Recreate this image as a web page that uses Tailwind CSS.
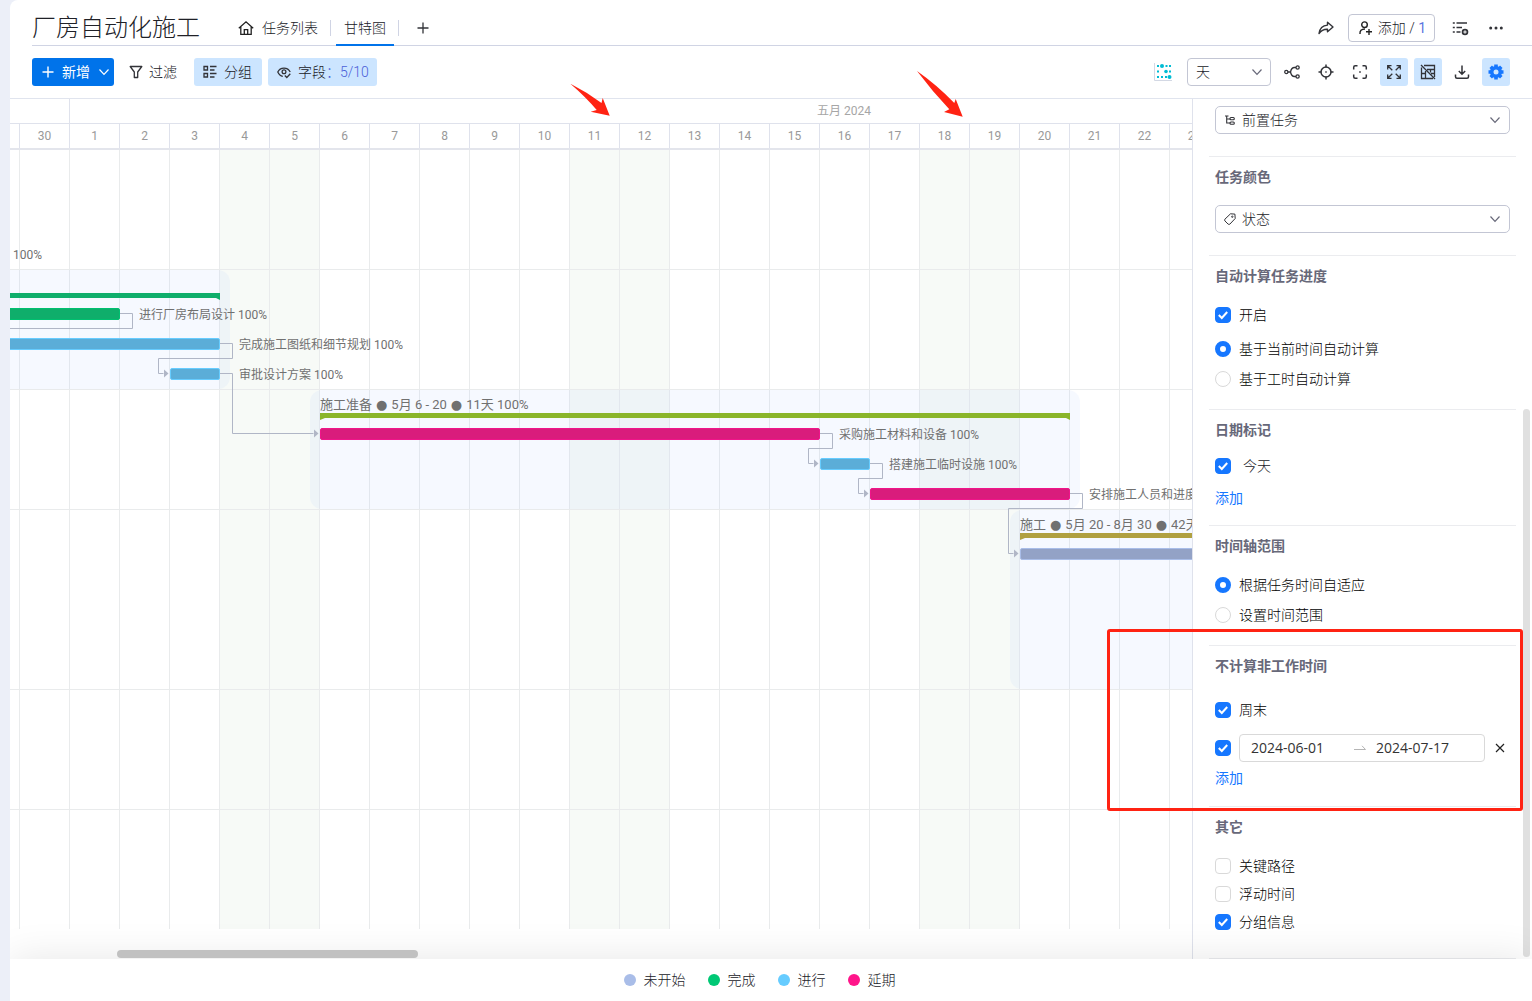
<!DOCTYPE html>
<html lang="zh-CN">
<head>
<meta charset="utf-8">
<meta name="viewport" content="width=device-width, initial-scale=1">
<title>厂房自动化施工</title>
<script src="https://cdn.jsdelivr.net/npm/@tailwindcss/browser@4"></script>
</head>
<body class="flex h-screen overflow-hidden bg-[#eceff8] pl-[10px] font-['Roboto','Noto_Sans_CJK_SC',sans-serif] text-sm font-light text-[#202127]">

<svg class="absolute size-0" aria-hidden="true">
  <symbol id="check" viewBox="0 0 16 16"><path d="M3.800 8l3 3 5.400-6" fill="none" stroke="#fff" stroke-width="2"/></symbol>
  <symbol id="chevron" viewBox="0 0 12 12"><path d="M1.500 3.500L6 8.300l4.500-4.800" fill="none" stroke="currentColor" stroke-width="1.200"/></symbol>
  <marker id="arrow" markerUnits="userSpaceOnUse" markerWidth="6" markerHeight="10" refX="0" refY="5" orient="auto"><path d="M0 .5l5 4.500-5 4.500z" fill="#b0b6c6"/></marker>
</svg>

<div class="relative flex min-w-0 flex-1 flex-col overflow-hidden rounded-tl-lg bg-white">

  <header class="ml-[22px] flex h-[46px] items-center border-b border-[#d0d4e4] pr-[22px]">
    <h1 class="w-[196px] pt-[10px] text-2xl font-light whitespace-nowrap">厂房自动化施工</h1>
    <nav class="flex h-full items-center pt-[10px]">
      <a href="#list" class="flex items-center gap-2 px-[10px]">
        <svg class="size-4" viewBox="0 0 16 16" fill="none" stroke="#222" stroke-width="1.300"><path d="M.8 8.200L8 1.800l7.200 6.400M2.800 6.800v7.500h10.400V6.800M6.300 14.300V9.600h3.400v4.700"/></svg>
        任务列表
      </a>
      <span class="ml-[2px] h-4 w-px bg-[#d0d4e4]"></span>
      <a href="#gantt" aria-current="page" class="ml-[5px] mr-1 flex h-[36px] items-center border-b-2 border-[#0073ea] px-2 pb-1 pt-[6px]">甘特图</a>
      <span class="h-4 w-px bg-[#d0d4e4]"></span>
      <button class="ml-[18px]" aria-label="添加视图">
        <svg class="size-3" viewBox="0 0 12 12" fill="none" stroke="#323338" stroke-width="1.300"><path d="M6 .5v11M.5 6h11"/></svg>
      </button>
    </nav>
    <div class="ml-auto flex items-center pt-[10px]">
      <button aria-label="分享" class="mr-[14px]">
        <svg class="size-4" viewBox="0 0 16 16" fill="none" stroke="#323338" stroke-width="1.400" stroke-linejoin="round"><path d="M9.500 2.300L15 7l-5.500 4.800V9.200C6 9 3.500 10 1 13.500c.6-4.500 3.500-8 8.500-8.400z"/></svg>
      </button>
      <button class="flex h-7 items-center gap-[6px] rounded border border-[#c3c6d4] pr-2 pl-[9px] whitespace-nowrap">
        <svg class="size-[14px]" viewBox="0 0 14 14" fill="none" stroke="#222" stroke-width="1.400"><circle cx="6.500" cy="3.700" r="2.800"/><path d="M2 13c-.3-3.200 1.300-5 5-5M8 10.800h6M11 8v6"/></svg>
        <span>添加 / <span class="font-normal text-[#5b76e0]">1</span></span>
      </button>
      <button aria-label="列表设置" class="ml-[17px]">
        <svg class="h-4 w-[18px]" viewBox="0 0 18 16" fill="none" stroke="#323338" stroke-width="1.400"><path d="M4.500 3H15M4.500 7.500H10M4.500 12H8.500M.8 3h2M.8 7.500h2M.8 12h2"/><circle cx="13" cy="12" r="3.300" fill="#323338" stroke="none"/><path d="M13 10.300v3.400M11.300 12h3.400" stroke="#fff" stroke-width="1"/></svg>
      </button>
      <button aria-label="更多" class="ml-[19px] mr-[7px]">
        <svg class="h-1 w-[14px]" viewBox="0 0 14 4" fill="#323338"><circle cx="1.700" cy="2" r="1.500"/><circle cx="7" cy="2" r="1.500"/><circle cx="12.300" cy="2" r="1.500"/></svg>
      </button>
    </div>
  </header>

  <div class="flex h-[53px] items-center gap-[6px] border-b border-[#e0e4ee] pl-[22px] pr-[22px] whitespace-nowrap">
    <button class="flex h-7 w-[82px] items-center rounded-[3px] bg-[#0073ea] pl-[10px] font-normal text-white">
      <svg class="size-3" viewBox="0 0 12 12" fill="none" stroke="currentColor" stroke-width="1.400"><path d="M6 .5v11M.5 6h11"/></svg>
      <span class="mx-2">新增</span>
      <svg class="size-3"><use href="#chevron"/></svg>
    </button>
    <button class="flex h-7 w-[68px] items-center gap-[6px] pl-[9px]">
      <svg class="size-[14px]" viewBox="0 0 14 14" fill="none" stroke="#323338" stroke-width="1.300" stroke-linejoin="round"><path d="M1.200 1.500h11.600L8.700 7v5.500H5.300V7z"/></svg>
      过滤
    </button>
    <button class="flex h-7 w-[68px] items-center gap-[7px] rounded-[3px] bg-[#cce5ff] pl-[9px]">
      <svg class="size-[14px]" viewBox="0 0 14 14" fill="none" stroke="#323338" stroke-width="1.300"><path d="M1 1.500h3.500V5H1zM1 8.500h3.500V12H1zM7 1.500h6.500M7 5h4.500M7 8.500h6.500M7 12h4.500"/></svg>
      分组
    </button>
    <button class="flex h-7 w-[109px] items-center gap-[7px] rounded-[3px] bg-[#cce5ff] pl-[9px]">
      <svg class="size-[14px]" viewBox="0 0 14 14" fill="none" stroke="#323338" stroke-width="1.300"><path d="M5.800 11.300C3.500 11 1.800 9.300.8 7c2.300-5.300 10-5.300 12.400 0"/><circle cx="7" cy="6.800" r="1.900"/><path d="M7.800 10.500l2 2 3.500-3.800"/></svg>
      <span class="flex">字段<span class="text-[#4a5fd8]">：</span><span class="text-[#4a5fd8]">5/10</span></span>
    </button>

    <svg class="ml-auto mr-[9px] size-[18px]" viewBox="0 0 18 18"><path d="M.5 0v17.500H18" fill="none" stroke="#d3d8e4"/><g fill="#00bcd4"><circle cx="8" cy="3" r="2"/><circle cx="12" cy="8.500" r="1.800"/><circle cx="15.500" cy="14" r="2"/><path d="M3 2h2v2H3zM11.500 2h2v2h-2zM15 2h2v2h-2zM3 7.500h2v2H3zM15 7.500h2v2h-2zM3 13h2v2H3zM7 13h2v2H7zM11 13h2v2h-2z"/></g></svg>
    <div class="relative mr-px flex w-[84px] items-center">
      <select aria-label="时间单位" class="h-7 w-full appearance-none rounded border border-[#c3c6d4] bg-white px-2 font-light"><option>天</option><option>周</option><option>月</option></select>
      <svg class="pointer-events-none absolute right-2 size-3 text-[#676879]"><use href="#chevron"/></svg>
    </div>
    <button aria-label="依赖" class="flex size-7 items-center justify-center"><svg class="size-4" viewBox="0 0 16 16" fill="none" stroke="#323338" stroke-width="1.300"><circle cx="2.300" cy="8" r="1.600"/><circle cx="13.600" cy="3.500" r="1.600"/><circle cx="13.600" cy="12.500" r="1.600"/><path d="M4 8h2.500M12 3.500h-1.500C8 3.500 7 5.500 6.500 8c.5 2.500 1.500 4.500 4 4.500H12"/></svg></button>
    <button aria-label="定位今天" class="flex size-7 items-center justify-center"><svg class="size-4" viewBox="0 0 16 16" fill="none" stroke="#323338" stroke-width="1.500"><circle cx="8" cy="8" r="5"/><path d="M8 .5v3M8 12.500v3M.5 8h3M12.500 8h3M7.300 8h1.400"/></svg></button>
    <button aria-label="聚焦" class="flex size-7 items-center justify-center"><svg class="size-4" viewBox="0 0 16 16" fill="none" stroke="#323338" stroke-width="1.500"><path d="M1.700 5.500V3.200q0-1.500 1.500-1.500h2.300M10.500 1.700h2.300q1.500 0 1.500 1.500v2.300M14.300 10.500v2.300q0 1.500-1.500 1.500h-2.300M5.500 14.300H3.200q-1.500 0-1.500-1.500v-2.300M7.200 8h1.600"/></svg></button>
    <button aria-label="全屏" class="flex size-7 items-center justify-center rounded-[3px] bg-[#cce5ff]"><svg class="size-4" viewBox="0 0 16 16" fill="none" stroke="#323338" stroke-width="1.300"><path d="M1.700 5.500V1.700h3.800M1.700 1.700l4.600 4.600M10.500 1.700h3.800v3.800M14.300 1.700L9.700 6.300M14.300 10.500v3.800h-3.800M14.300 14.300L9.700 9.700M5.500 14.300H1.700v-3.800M1.700 14.300l4.600-4.600"/></svg></button>
    <button aria-label="隐藏表格" class="flex size-7 items-center justify-center rounded-[3px] bg-[#cce5ff]"><svg class="size-4" viewBox="0 0 16 16" fill="none" stroke="#323338" stroke-width="1.300"><path d="M4 1.500h10.500V13M1.500 3.500v11H13M5.500 7v7.500M7 5.500h7.500M1.500 9.500h4M11 9.500h3.500M10.500 5.500v3M1 1l14 14"/></svg></button>
    <button aria-label="下载" class="flex size-7 items-center justify-center"><svg class="size-4" viewBox="0 0 16 16" fill="none" stroke="#323338" stroke-width="1.500"><path d="M8 1.500V10M4.800 7L8 10.200 11.200 7M1.500 10.500v2.300q0 1.500 1.500 1.500h10q1.500 0 1.500-1.500v-2.300"/></svg></button>
    <button aria-label="设置" class="flex size-7 items-center justify-center rounded-[3px] bg-[#cce5ff]"><svg class="size-4" viewBox="0 0 16 16"><path d="M8 .5v15M.5 8h15M2.700 2.700l10.600 10.600M13.300 2.700L2.700 13.300" stroke="#1677ff" stroke-width="3.600"/><circle cx="8" cy="8" r="4.300" fill="none" stroke="#1677ff" stroke-width="3.600"/><circle cx="8" cy="8" r="2.500" fill="#cce5ff"/></svg></button>
  </div>

  <div class="flex min-h-0 flex-1">

    <section aria-label="甘特图" class="relative min-w-0 flex-1 overflow-hidden">
      <div class="flex h-[25px] border-b border-[#dfe2ec] text-xs font-normal text-[#a6a6a6]">
        <div class="w-[60px] shrink-0 border-r border-[#dfe2ec]"></div>
        <div class="flex w-[1548px] shrink-0 items-center justify-center">五月 2024</div>
      </div>
      <div class="flex h-[26px] border-b-2 border-[#e3e5ec] text-center text-xs leading-6 font-normal text-[#999] *:w-[50px] *:shrink-0 *:border-r *:border-[#dfe2ec]">
        <div class="-ml-10"></div><div>30</div><div>1</div><div>2</div><div>3</div><div>4</div><div>5</div><div>6</div><div>7</div><div>8</div><div>9</div><div>10</div><div>11</div><div>12</div><div>13</div><div>14</div><div>15</div><div>16</div><div>17</div><div>18</div><div>19</div><div>20</div><div>21</div><div>22</div><div>23</div>
      </div>

      <div class="relative h-[779px]">
        <div class="flex h-full *:w-[50px] *:shrink-0 *:border-r *:border-[#e9ebec]">
          <div class="-ml-10"></div><div></div><div></div><div></div><div></div>
          <div class="bg-[#f7faf7]"></div><div class="bg-[#f7faf7]"></div>
          <div></div><div></div><div></div><div></div><div></div>
          <div class="bg-[#f7faf7]"></div><div class="bg-[#f7faf7]"></div>
          <div></div><div></div><div></div><div></div><div></div>
          <div class="bg-[#f7faf7]"></div><div class="bg-[#f7faf7]"></div>
          <div></div><div></div><div></div><div></div>
        </div>
        <div class="absolute inset-0 flex flex-col *:border-b *:border-[#e9ebec]">
          <div class="h-[120px]"></div><div class="h-[120px]"></div><div class="h-[120px]"></div><div class="h-[180px]"></div><div class="h-[120px]"></div>
        </div>

        <!-- group backgrounds -->
        <div class="absolute top-[120px] -left-5 h-[119px] w-[240px] rounded-xl bg-[rgba(165,200,255,0.1)]"></div>
        <div class="absolute top-[240px] left-[300px] h-[119px] w-[770px] rounded-xl bg-[rgba(165,200,255,0.1)]"></div>
        <div class="absolute top-[360px] left-[1000px] h-[179px] w-[2000px] rounded-xl bg-[rgba(165,200,255,0.1)]"></div>

        <!-- dependency links -->
        <svg class="absolute inset-0 size-full" fill="none" stroke="#b0b6c6" stroke-width="1">
          <path d="M110 163.500h12.500v15H-2"/>
          <path d="M210 193.500h12.500v15h-74v15h5" marker-end="url(#arrow)"/>
          <path d="M210 223.500h12.500v60h81" marker-end="url(#arrow)"/>
          <path d="M810 283.500h12.500v15h-24v15h5" marker-end="url(#arrow)"/>
          <path d="M860 313.500h12.500v15h-24v15h5" marker-end="url(#arrow)"/>
          <path d="M1060 343.500h12.500v15h-74v45h5" marker-end="url(#arrow)"/>
          <path d="M-2 143h212v7l-4-2H-2z" fill="#0fae6b" stroke="none"/>
          <path d="M310 263h750v7l-4-2H315l-5 2z" fill="#8ab52a" stroke="none"/>
          <path d="M1010 383h2000v5H1015l-5 2z" fill="#b0a040" stroke="none"/>
        </svg>

        <!-- task bars -->
        <div class="absolute top-[158px] -left-5 h-3 w-[130px] rounded-xs border border-[#00c070] bg-[#0fae6b]"></div>
        <div class="absolute top-[188px] -left-5 h-3 w-[230px] rounded-xs border border-[#66ccff] bg-[#5badd8]"></div>
        <div class="absolute top-[218px] left-[160px] h-3 w-[50px] rounded-xs border border-[#66ccff] bg-[#5badd8]"></div>
        <div class="absolute top-[278px] left-[310px] h-3 w-[500px] rounded-xs border border-[#f0148a] bg-[#d91c7c]"></div>
        <div class="absolute top-[308px] left-[810px] h-3 w-[50px] rounded-xs border border-[#66ccff] bg-[#5badd8]"></div>
        <div class="absolute top-[338px] left-[860px] h-3 w-[200px] rounded-xs border border-[#f0148a] bg-[#d91c7c]"></div>
        <div class="absolute top-[398px] left-[1010px] h-3 w-[2000px] rounded-xs border border-[#a9bde8] bg-[#93a2c6]"></div>

        <!-- task labels -->
        <div class="text-xs leading-4 font-normal whitespace-nowrap text-[#707070] *:absolute">
          <span class="top-[97px] left-[3px]">100%</span>
          <span class="top-[157px] left-[129px]">进行厂房布局设计 100%</span>
          <span class="top-[187px] left-[229px]">完成施工图纸和细节规划 100%</span>
          <span class="top-[217px] left-[229px]">审批设计方案 100%</span>
          <span class="top-[247px] left-[310px] flex gap-1 text-[13px]">施工准备 <i class="font-['DejaVu_Sans'] not-italic">●</i> 5月 6 - 20 <i class="font-['DejaVu_Sans'] not-italic">●</i> 11天 100%</span>
          <span class="top-[277px] left-[829px]">采购施工材料和设备 100%</span>
          <span class="top-[307px] left-[879px]">搭建施工临时设施 100%</span>
          <span class="top-[337px] left-[1079px]">安排施工人员和进度 100%</span>
          <span class="top-[367px] left-[1010px] flex gap-1 text-[13px]">施工 <i class="font-['DejaVu_Sans'] not-italic">●</i> 5月 20 - 8月 30 <i class="font-['DejaVu_Sans'] not-italic">●</i> 42天 100%</span>
        </div>
      </div>
      <div class="absolute bottom-px left-[107px] z-20 h-2 w-[301px] rounded-full bg-[#c1c1c1]"></div>
    </section>

    <aside aria-label="甘特图设置" class="relative w-[340px] shrink-0 overflow-hidden border-l border-[#dfe2ec] bg-white px-4">
      <section class="border-b border-[#ebecef] px-[6px] pt-[7px] pb-[22px]">
        <div class="relative flex items-center">
          <svg class="pointer-events-none absolute left-[10px] size-[10px]" viewBox="0 0 10 10" fill="none" stroke="#323338" stroke-width="1.100"><path d="M0 1h3.500M1.700 1v7H5M1.700 4H5"/><rect x="5" y="2.500" width="4.300" height="2.200" rx="1"/><rect x="5" y="7" width="4.300" height="2.200" rx="1"/></svg>
          <select aria-label="前置任务" class="h-7 w-full appearance-none rounded-[5px] border border-[#c3c6d4] bg-transparent pl-[26px] font-light"><option>前置任务</option><option>后置任务</option></select>
          <svg class="pointer-events-none absolute right-[9px] size-3 text-[#676879]"><use href="#chevron"/></svg>
        </div>
      </section>

      <section class="border-b border-[#ebecef] px-[6px] pt-[10px] pb-[22px]">
        <h2 class="mb-[18px] leading-5 font-bold text-[#676879]">任务颜色</h2>
        <div class="relative flex items-center">
          <svg class="pointer-events-none absolute left-[9px] size-3" viewBox="0 0 12 12" fill="none" stroke="#323338" stroke-width="1" stroke-linejoin="round"><path d="M6.500.8l4.400.3.300 4.400-5.400 5.700q-1 .6-1.800-.2L.9 7.900q-.7-1 0-1.700z"/><circle cx="8.300" cy="3.700" r=".7"/></svg>
          <select aria-label="任务颜色" class="h-7 w-full appearance-none rounded-[5px] border border-[#c3c6d4] bg-transparent pl-[26px] font-light"><option>状态</option><option>优先级</option></select>
          <svg class="pointer-events-none absolute right-[9px] size-3 text-[#676879]"><use href="#chevron"/></svg>
        </div>
      </section>

      <section class="border-b border-[#ebecef] px-[6px] pt-[10px] pb-[19px] text-black">
        <h2 class="mb-[18px] leading-5 font-bold text-[#676879]">自动计算任务进度</h2>
        <label class="mb-3 flex h-[22px] items-center gap-2"><span class="relative flex"><input type="checkbox" checked class="peer size-4 appearance-none rounded border border-[#d9d9d9] checked:border-[#1677ff] checked:bg-[#1677ff]"><svg class="pointer-events-none absolute inset-0 hidden size-4 peer-checked:block"><use href="#check"/></svg></span>开启</label>
        <label class="mb-2 flex h-[22px] items-center gap-2"><input type="radio" name="calc" checked class="size-4 appearance-none rounded-full border border-[#d9d9d9] checked:border-[5px] checked:border-[#1677ff]">基于当前时间自动计算</label>
        <label class="flex h-[22px] items-center gap-2"><input type="radio" name="calc" class="size-4 appearance-none rounded-full border border-[#d9d9d9] checked:border-[5px] checked:border-[#1677ff]">基于工时自动计算</label>
      </section>

      <section class="border-b border-[#ebecef] px-[6px] pt-[10px] pb-4">
        <h2 class="mb-[15px] leading-5 font-bold text-[#676879]">日期标记</h2>
        <label class="mb-[10px] flex h-[22px] items-center gap-3"><span class="relative flex"><input type="checkbox" checked class="peer size-4 appearance-none rounded border border-[#d9d9d9] checked:border-[#1677ff] checked:bg-[#1677ff]"><svg class="pointer-events-none absolute inset-0 hidden size-4 peer-checked:block"><use href="#check"/></svg></span>今天</label>
        <a href="#add-mark" class="flex h-[22px] items-center font-normal text-[#1677ff]">添加</a>
      </section>

      <section class="border-b border-[#ebecef] px-[6px] pt-[10px] pb-[19px] text-black">
        <h2 class="mb-[18px] leading-5 font-bold text-[#676879]">时间轴范围</h2>
        <label class="mb-2 flex h-[22px] items-center gap-2"><input type="radio" name="range" checked class="size-4 appearance-none rounded-full border border-[#d9d9d9] checked:border-[5px] checked:border-[#1677ff]">根据任务时间自适应</label>
        <label class="flex h-[22px] items-center gap-2"><input type="radio" name="range" class="size-4 appearance-none rounded-full border border-[#d9d9d9] checked:border-[5px] checked:border-[#1677ff]">设置时间范围</label>
      </section>

      <section class="border-b border-[#ebecef] px-[6px] pt-[10px] pb-[17px] text-black">
        <h2 class="mb-[23px] leading-5 font-bold text-[#676879]">不计算非工作时间</h2>
        <label class="mb-[13px] flex h-[22px] items-center gap-2"><span class="relative flex"><input type="checkbox" checked class="peer size-4 appearance-none rounded border border-[#d9d9d9] checked:border-[#1677ff] checked:bg-[#1677ff]"><svg class="pointer-events-none absolute inset-0 hidden size-4 peer-checked:block"><use href="#check"/></svg></span>周末</label>
        <div class="mb-[5px] flex items-center gap-2">
          <span class="relative flex"><input type="checkbox" checked aria-label="启用日期范围" class="peer size-4 appearance-none rounded border border-[#d9d9d9] checked:border-[#1677ff] checked:bg-[#1677ff]"><svg class="pointer-events-none absolute inset-0 hidden size-4 peer-checked:block"><use href="#check"/></svg></span>
          <div class="flex h-7 w-[246px] items-center rounded border border-[#d9d9d9] px-[11px] font-['Open_Sans',sans-serif] font-normal text-[#333]">
            <input type="text" aria-label="开始日期" value="2024-06-01" class="w-[103px] min-w-0">
            <svg class="mr-[10px] h-[6px] w-3" viewBox="0 0 12 6" fill="none" stroke="#b5b5b5"><path d="M0 4.500h11.500L8 .8"/></svg>
            <input type="text" aria-label="结束日期" value="2024-07-17" class="w-[90px] min-w-0">
          </div>
          <button aria-label="删除" class="ml-[2px]"><svg class="size-[10px]" viewBox="0 0 10 10" stroke="#222" stroke-width="1.200"><path d="M1 1l8 8M9 1L1 9"/></svg></button>
        </div>
        <a href="#add-range" class="flex h-[22px] items-center font-normal text-[#1677ff]">添加</a>
      </section>

      <section class="border-b border-[#ebecef] px-[6px] pt-[10px] pb-[25px] text-black">
        <h2 class="mb-[18px] leading-5 font-bold text-[#676879]">其它</h2>
        <label class="mb-[6px] flex h-[22px] items-center gap-2"><span class="relative flex"><input type="checkbox" class="peer size-4 appearance-none rounded border border-[#d9d9d9] checked:border-[#1677ff] checked:bg-[#1677ff]"><svg class="pointer-events-none absolute inset-0 hidden size-4 peer-checked:block"><use href="#check"/></svg></span>关键路径</label>
        <label class="mb-[6px] flex h-[22px] items-center gap-2"><span class="relative flex"><input type="checkbox" class="peer size-4 appearance-none rounded border border-[#d9d9d9] checked:border-[#1677ff] checked:bg-[#1677ff]"><svg class="pointer-events-none absolute inset-0 hidden size-4 peer-checked:block"><use href="#check"/></svg></span>浮动时间</label>
        <label class="flex h-[22px] items-center gap-2"><span class="relative flex"><input type="checkbox" checked class="peer size-4 appearance-none rounded border border-[#d9d9d9] checked:border-[#1677ff] checked:bg-[#1677ff]"><svg class="pointer-events-none absolute inset-0 hidden size-4 peer-checked:block"><use href="#check"/></svg></span>分组信息</label>
      </section>
      <div class="absolute top-[310px] right-[2px] h-[548px] w-[7px] rounded-full bg-[#e0e0e0]"></div>
    </aside>
  </div>

  <footer class="relative z-10 flex h-[42px] shrink-0 items-center justify-center gap-[22px] bg-white pr-[23px] shadow-[0_0_40px_rgba(0,0,0,0.1)]">
    <span class="flex items-center gap-2"><i class="size-3 rounded-full bg-[#a9bde8]"></i>未开始</span>
    <span class="flex items-center gap-2"><i class="size-3 rounded-full bg-[#00c875]"></i>完成</span>
    <span class="flex items-center gap-2"><i class="size-3 rounded-full bg-[#66ccff]"></i>进行</span>
    <span class="flex items-center gap-2"><i class="size-3 rounded-full bg-[#ff158a]"></i>延期</span>
  </footer>

  <!-- callouts -->
  <div class="pointer-events-none absolute top-[629px] right-[9px] z-30 h-[182px] w-[416px] rounded-[3px] border-3 border-[#ff2313]"></div>
  <svg class="pointer-events-none absolute top-[84px] left-[560px] z-30 h-8 w-10" viewBox="570 84 40 32" fill="#ff2313"><path d="M570.300 83.700q16 8 31.200 19.300l1.200-5 7 17.800-19-4 6-1.800q-11-13-26.400-26.300z"/></svg>
  <svg class="pointer-events-none absolute top-[70px] left-[906px] z-30 h-12 w-12" viewBox="916 70 48 48" fill="#ff2313"><path d="M917 71q20 14 37.300 32l1.400-4 7 17.700-18.700-4.700 5.300-2.700Q932 91 917 71z"/></svg>
</div>
</body>
</html>
